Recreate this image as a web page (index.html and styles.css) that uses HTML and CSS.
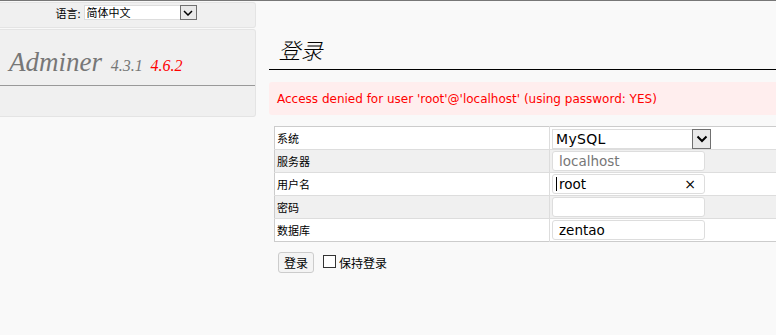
FILE: index.html
```html
<!DOCTYPE html>
<html lang="zh-CN">
<head>
<meta charset="utf-8">
<title>登录 - Adminer</title>
<link rel="stylesheet" href="styles.css">
</head>
<body>
<div class="page">
  <aside class="sidebar">
    <div class="lang">
      <span class="lang-label">语言:</span>
      <span class="select lang-select"><span class="select-text">简体中文</span><span class="select-arrow"><svg width="10" height="6" viewBox="0 0 10 6"><path d="M1 1 L5 5 L9 1" fill="none" stroke="#000" stroke-width="1.5"/></svg></span></span>
    </div>
    <div class="menu">
      <h1 class="logo"><span class="logo-name">Adminer</span> <span class="ver">4.3.1</span> <span class="ver-new">4.6.2</span></h1>
    </div>
  </aside>
  <main class="content">
    <h2 class="title"><span class="title-text">登录</span></h2>
    <div class="error">Access denied for user 'root'@'localhost' (using password: YES)</div>
    <table class="login">
      <tr class="odd"><th>系统</th><td><span class="select sys-select"><span class="select-text">MySQL</span><span class="select-arrow big"><svg width="12" height="8" viewBox="0 0 12 8"><path d="M1.5 1.5 L6 6 L10.5 1.5" fill="none" stroke="#000" stroke-width="2"/></svg></span></span></td></tr>
      <tr class="even"><th>服务器</th><td><span class="input placeholder">localhost</span></td></tr>
      <tr class="odd"><th>用户名</th><td><span class="input"><span class="caret"></span>root<span class="clear">×</span></span></td></tr>
      <tr class="even"><th>密码</th><td><span class="input"></span></td></tr>
      <tr class="odd"><th>数据库</th><td><span class="input">zentao</span></td></tr>
    </table>
    <div class="actions">
      <span class="btn">登录</span>
      <label class="keep"><span class="checkbox"></span>保持登录</label>
    </div>
  </main>
</div>
</body>
</html>
```
FILE: styles.css
```css
html, body {
  margin: 0;
  padding: 0;
}
body {
  background: #f9f9f9;
  border-top: 1px solid #777;
  font-family: "DejaVu Sans", "Noto Sans CJK SC", sans-serif;
  font-size: 13px;
  color: #000;
  height: 334px;
  overflow: hidden;
}
.page {
  display: flex;
  align-items: flex-start;
}
.sidebar {
  width: 256px;
  flex: none;
  padding-top: 1px;
  display: flex;
  flex-direction: column;
  gap: 1px;
}
.lang {
  background: #f0f0f0;
  border: 1px solid #e4e4e4;
  border-left: none;
  border-radius: 0 3px 3px 0;
  display: flex;
  justify-content: center;
  align-items: flex-start;
  padding-top: 2px;
  box-sizing: border-box;
  height: 26px;
  gap: 3px;
  padding-right: 3px;
}
.lang-label {
  font-family: "Noto Sans CJK SC", sans-serif;
  font-size: 11px;
  line-height: 14px;
  margin-top: 1px;
}
.select {
  display: inline-flex;
  align-items: stretch;
  background: #fff;
  border: 1px solid #ddd;
  box-sizing: border-box;
}
.lang-select {
  width: 113px;
  height: 15px;
}
.lang-select .select-text {
  font-family: "Noto Sans CJK SC", sans-serif;
  font-size: 11px;
  line-height: 13px;
  padding-left: 2px;
}
.select-text {
  flex: 1;
}
.select-arrow {
  width: 17px;
  background: #e9e9e9;
  border: 1px solid #707070;
  display: flex;
  align-items: center;
  justify-content: center;
  box-sizing: border-box;
  margin: -1px -1px -1px 0;
}
.menu {
  height: 88px;
  background: #f0f0f0;
  border: 1px solid #e4e4e4;
  border-left: none;
  border-radius: 0 3px 3px 0;
  box-sizing: border-box;
}
.logo {
  margin: 0;
  padding: 17px 0 0 9px;
  height: 56px;
  box-sizing: border-box;
  border-bottom: 1px solid #999;
  font-family: "Liberation Serif", serif;
  font-style: italic;
  font-weight: normal;
  color: #777;
  font-size: 27px;
  line-height: 30px;
  white-space: nowrap;
}
.ver {
  font-size: 16px;
  color: #777;
  margin-left: 2px;
}
.ver-new {
  font-size: 16px;
  color: #f00;
  margin-left: 1px;
}
.content {
  flex: 1;
  margin-left: 13px;
}
.title {
  margin: 0;
  padding: 34px 0 0 12px;
  height: 69px;
  box-sizing: border-box;
  border-bottom: 1px solid #000;
  font-family: "Noto Sans CJK SC", sans-serif;
  font-weight: normal;
  font-size: 22px;
  line-height: 28px;
  color: #000;
}
.title-text {
  display: inline-block;
  transform: skewX(-14deg);
  font-weight: 300;
}
.error {
  margin-top: 12px;
  height: 33px;
  box-sizing: border-box;
  background: #fee;
  color: #f00;
  padding: 0 8px;
  display: flex;
  align-items: center;
  font-size: 12px;
  border-radius: 3px 0 0 3px;
}
.login {
  margin: 11px 0 0 5px;
  border-collapse: collapse;
  border: 1px solid #ccc;
  border-right: none;
  width: 510px;
}
.login th, .login td {
  height: 22px;
  padding: 0;
  vertical-align: middle;
}
.login tr + tr th, .login tr + tr td {
  border-top: 1px solid #ddd;
}
.login th {
  width: 272px;
  text-align: left;
  font-weight: normal;
  font-family: "Noto Sans CJK SC", sans-serif;
  font-size: 11px;
  padding-left: 2px;
  border-right: 1px solid #ddd;
}
.login td {
  padding-left: 2px;
}
.login tr.odd {
  background: #fff;
}
.login tr.even {
  background: #f0f0f0;
}
.sys-select {
  width: 159px;
  height: 20px;
  margin-top: 1px;
}
.sys-select .select-text {
  font-size: 14px;
  line-height: 18px;
  padding-left: 3px;
  letter-spacing: 0.3px;
}
.select-arrow.big {
  width: 19px;
}
.input {
  display: flex;
  align-items: center;
  width: 153px;
  height: 20px;
  box-sizing: border-box;
  background: #fff;
  border: 1px solid #ddd;
  border-radius: 3px;
  padding-left: 6px;
  padding-right: 8px;
  font-size: 13.5px;
  line-height: 18px;
}
.placeholder {
  color: #777;
}
.caret {
  width: 1px;
  height: 14px;
  background: #000;
  margin-left: -3px;
  margin-right: 2px;
}
.clear {
  margin-left: auto;
  font-size: 14px;
}
.actions {
  margin: 10px 0 0 9px;
  display: flex;
  align-items: center;
  gap: 9px;
}
.btn {
  display: inline-block;
  width: 36px;
  height: 21px;
  box-sizing: border-box;
  border: 1px solid #ccc;
  border-radius: 3px;
  background: #f4f4f4;
  font-family: "Noto Sans CJK SC", sans-serif;
  font-size: 12px;
  line-height: 19px;
  text-align: center;
}
.keep {
  display: flex;
  align-items: center;
  font-family: "Noto Sans CJK SC", sans-serif;
  font-size: 12px;
  gap: 3px;
}
.checkbox {
  width: 13px;
  height: 13px;
  box-sizing: border-box;
  border: 1px solid #333;
  background: #fff;
  margin-top: -2px;
}
```
